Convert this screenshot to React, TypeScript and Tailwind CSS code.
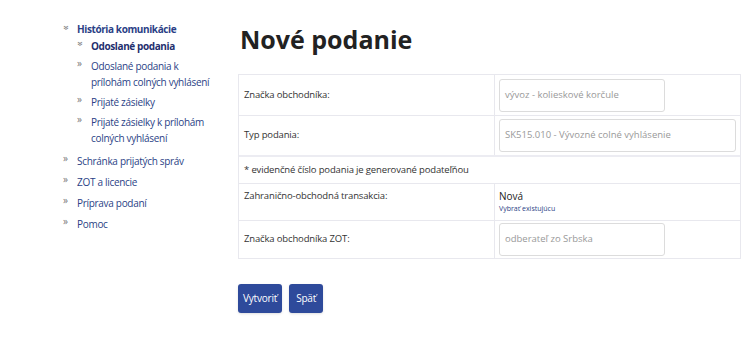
import React from 'react';

const font = { fontFamily: '"Open Sans", "Noto Sans", sans-serif' };

interface NavItem {
  label: string[];
  active?: boolean;
}

const subItems: NavItem[] = [
  { label: ['Odoslané podania'], active: true },
  { label: ['Odoslané podania k', 'prílohám colných vyhlásení'] },
  { label: ['Prijaté zásielky'] },
  { label: ['Prijaté zásielky k prílohám', 'colných vyhlásení'] },
];

const topItems = ['Schránka prijatých správ', 'ZOT a licencie', 'Príprava podaní', 'Pomoc'];

const Chevron = ({ down }: { down?: boolean }) => (
  <span className="w-[14px] h-[15px] shrink-0 flex items-start">
    <span className={`block text-[10px] leading-[11px] text-[#777] ${down ? 'rotate-90 ml-[1px]' : ''}`}>»</span>
  </span>
);

const Sidebar = () => (
  <div className="w-[238px] shrink-0 pl-[63px] pt-[22px] text-[10px] tracking-[-0.3px] text-[#2b3f86]">
    <div className="flex">
      <Chevron down />
      <div>
        <div className="font-bold leading-[15px] tracking-[-0.4px]">História komunikácie</div>
        <div className="mt-[1px] flex flex-col gap-[4px]">
          {subItems.map((it, i) => (
            <div key={i} className="flex">
              <Chevron down={it.active} />
              <div className={it.active ? 'font-bold tracking-[-0.4px] text-[#1f2f6e]' : ''}>
                {it.label.map((l, j) => (
                  <div key={j} className="leading-[16px] whitespace-nowrap">{l}</div>
                ))}
              </div>
            </div>
          ))}
        </div>
      </div>
    </div>
    <div className="mt-[7px] flex flex-col gap-[5px]">
      {topItems.map((t) => (
        <div key={t} className="flex">
          <Chevron />
          <div className="leading-[16px] whitespace-nowrap">{t}</div>
        </div>
      ))}
    </div>
  </div>
);

const Input = ({ placeholder, wide }: { placeholder: string; wide?: boolean }) => (
  <div
    className={`${wide ? 'w-[237px]' : 'w-[166px]'} h-[33px] rounded-[3px] border border-[#dcdcdc] px-[5px] flex items-center text-[9.5px] text-[#999]`}
  >
    {placeholder}
  </div>
);

const Row = ({ label, children, h }: { label: string; children: React.ReactNode; h: string }) => (
  <div className={`flex border-b border-[#e8e8ee] ${h}`}>
    <div className="w-[256px] border-r border-[#e8e8ee] px-[5px] flex items-center text-[9.5px] tracking-[-0.15px] text-[#333]">{label}</div>
    <div className="flex-1 px-[4px] flex items-center">{children}</div>
  </div>
);

export default function App() {
  return (
    <div className="w-[744px] h-[355px] bg-white flex" style={font}>
      <Sidebar />
      <div className="flex-1 pt-[22px]">
        <h1 className="text-[25px] font-bold leading-[34px] text-[#222] ml-[2px]">Nové podanie</h1>
        <div className="mt-[18px] w-[503px] border-l border-r border-t border-[#e8e8ee]">
          <Row label="Značka obchodníka:" h="h-[41px]">
            <Input placeholder="vývoz - kolieskové korčule" />
          </Row>
          <div className="border-b-2 border-[#ececf2]">
            <Row label="Typ podania:" h="h-[39px] !border-b-0">
              <Input placeholder="SK515.010 - Vývozné colné vyhlásenie" wide />
            </Row>
          </div>
          <div className="h-[27px] border-b border-[#e8e8ee] px-[5px] flex items-center text-[9.5px] tracking-[-0.15px] text-[#333]">
            * evidenčné číslo podania je generované podateľňou
          </div>
          <div className="flex border-b border-[#e8e8ee] h-[37px]">
            <div className="w-[256px] border-r border-[#e8e8ee] px-[5px] pt-[5px] text-[9.5px] tracking-[-0.15px] text-[#333]">
              Zahranično-obchodná transakcia:
            </div>
            <div className="flex-1 px-[4px] pt-[5px]">
              <div className="text-[10px] leading-[14px] text-[#222]">Nová</div>
              <div className="text-[7px] leading-[12px] text-[#2b3f86]">Vybrať existujúcu</div>
            </div>
          </div>
          <Row label="Značka obchodníka ZOT:" h="h-[38px]">
            <Input placeholder="odberateľ zo Srbska" />
          </Row>
        </div>
        <div className="mt-[25px] flex gap-[7px]">
          <button className="h-[29px] px-[5px] rounded-[3px] bg-[#2e4a9b] text-white text-[10px] tracking-[-0.2px] shadow-sm">Vytvoriť</button>
          <button className="h-[29px] px-[7px] rounded-[3px] bg-[#2e4a9b] text-white text-[10px] tracking-[-0.2px] shadow-sm">Späť</button>
        </div>
      </div>
    </div>
  );
}
